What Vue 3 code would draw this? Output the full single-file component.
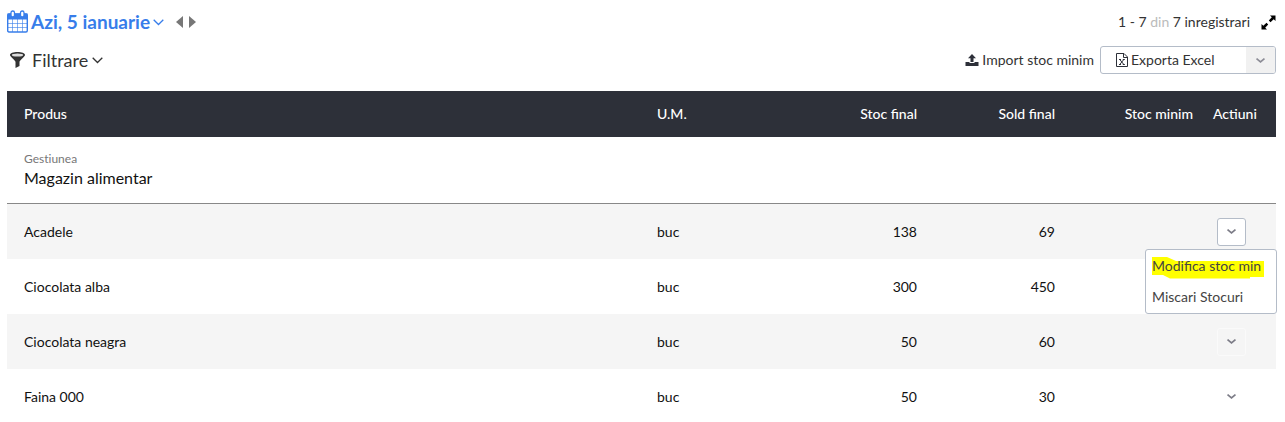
<script setup>
import { ref } from 'vue'

const rows = [
  { name: 'Acadele', unit: 'buc', stock: 138, balance: 69 },
  { name: 'Ciocolata alba', unit: 'buc', stock: 300, balance: 450 },
  { name: 'Ciocolata neagra', unit: 'buc', stock: 50, balance: 60 },
  { name: 'Faina 000', unit: 'buc', stock: 50, balance: 30 },
]
const open = ref(0)
const toggle = (i) => {
  open.value = open.value === i ? -1 : i
}
</script>

<template>
  <main class="page">
    <header class="bar top">
      <div class="group">
        <button class="date" type="button">
          <svg width="21" height="24" viewBox="0 0 21 24" fill="none" stroke="currentColor">
            <path d="M2 4H19Q20.300 4 20.300 5.500V20.500Q20.300 22 19 22H2Q.7 22 .7 20.500V5.500Q.7 4 2 4Z" stroke-width="1.400" />
            <path d="M.5 3.500H20.500V9.500H.5Z" fill="currentColor" stroke="none" />
            <path d="M5.500 9V22M10.500 9V22M15.500 9V22M1 13.500H20M1 17.500H20" stroke-opacity=".6" />
            <g fill="#fff" stroke-width="1.300"><rect x="4" y="1" width="3.500" height="6" rx="1.700" /><rect x="13.500" y="1" width="3.500" height="6" rx="1.700" /></g>
          </svg>
          <span>Azi, 5 ianuarie</span>
          <svg width="11" height="7" viewBox="0 0 11 7" fill="none" stroke="currentColor" stroke-width="1.300"><path d="M.7.8 5.500 5.500 10.300.8" /></svg>
        </button>
        <div class="steps">
          <button type="button" aria-label="Ziua anterioara"><svg width="7" height="12" viewBox="0 0 7 12"><path d="M7 0V12L0 6Z" fill="#777" /></svg></button>
          <button type="button" aria-label="Ziua urmatoare"><svg width="7" height="12" viewBox="0 0 7 12"><path d="M0 0V12L7 6Z" fill="#777" /></svg></button>
        </div>
      </div>
      <div class="group count">
        <span>1 - 7 <span class="muted">din</span> 7 inregistrari</span>
        <button type="button" aria-label="Ecran complet">
          <svg width="15" height="15" viewBox="0 0 15 15"><path d="M9 .5H14.500V6L12.700 4.200 9.500 7.200 7.800 5.500 10.800 2.300ZM6 14.500H.5V9L2.300 10.800 5.500 7.800 7.200 9.500 4.200 12.700Z" /></svg>
        </button>
      </div>
    </header>

    <div class="bar tools">
      <button class="filter" type="button">
        <svg width="15" height="16" viewBox="0 0 15 16">
          <path d="M0 3C0 1 3.400 0 7.500 0S15 1 15 3C15 4.500 9.500 8.500 9.500 10V14L5.500 16V10C5.500 8.500 0 4.500 0 3Z" fill="#333" />
          <ellipse cx="7.500" cy="3" rx="5.600" ry="1.500" fill="#ddd" />
        </svg>
        <span>Filtrare</span>
        <svg width="11" height="7" viewBox="0 0 11 7" fill="none" stroke="currentColor" stroke-width="1.300"><path d="M.7.8 5.500 5.500 10.300.8" /></svg>
      </button>
      <div class="group exports">
        <button class="import" type="button">
          <svg width="14" height="12" viewBox="0 0 14 12" fill="#2d3039"><path d="M7 0 11 4.200H8.500V8H5.500V4.200H3ZM.5 8H4.500V9H9.500V8H13.500V12H.5Z" /></svg>
          <span>Import stoc minim</span>
        </button>
        <div class="split">
          <button class="excel" type="button">
            <svg width="12" height="14" viewBox="0 0 12 14" fill="none" stroke="#2d3039"><path d="M.5.5H8L11.500 4V13.500H.5ZM7.500.5V4.500H11.500" /><path d="M3.800 6.500 7.800 11.500M7.800 6.500 3.800 11.500M3 6.500H5M6.800 6.500H8.800M3 11.500H5M6.800 11.500H8.800" /></svg>
            <span>Exporta Excel</span>
          </button>
          <button class="more" type="button" aria-label="Alte formate">
            <svg width="9" height="5" viewBox="0 0 9 5" fill="none" stroke="#8c8c96" stroke-width="1.700"><path d="M.5.6 4.500 3.900 8.500.6" /></svg>
          </button>
        </div>
      </div>
    </div>

    <table>
      <colgroup><col /><col class="c-unit" /><col class="c-stock" /><col class="c-num" /><col class="c-num" /><col class="c-act" /></colgroup>
      <thead>
        <tr><th>Produs</th><th>U.M.</th><th class="num">Stoc final</th><th class="num">Sold final</th><th class="num">Stoc minim</th><th>Actiuni</th></tr>
      </thead>
      <tbody>
        <tr class="store">
          <td colspan="6"><small>Gestiunea</small><div>Magazin alimentar</div></td>
        </tr>
        <tr v-for="(row, i) in rows" :key="row.name" class="item">
          <td>{{ row.name }}</td>
          <td>{{ row.unit }}</td>
          <td class="num">{{ row.stock }}</td>
          <td class="num">{{ row.balance }}</td>
          <td></td>
          <td>
            <div class="actions">
              <button class="toggle" :class="{ open: open === i }" type="button" :aria-label="'Actiuni ' + row.name" :aria-expanded="open === i" @click="toggle(i)">
                <svg width="9" height="5" viewBox="0 0 9 5" fill="none" stroke="#7c7c87" stroke-width="1.700"><path d="M.5.6 4.500 3.900 8.500.6" /></svg>
              </button>
              <div v-if="open === i" class="menu">
                <button type="button">
                  <svg class="marker" width="112" height="22" viewBox="0 0 112 22"><path d="M0 0H15L24 4H112V20H98V21.500H18L11 18H0Z" fill="#ff0" /></svg>
                  <span>Modifica stoc min</span>
                </button>
                <button type="button"><span>Miscari Stocuri</span></button>
              </div>
            </div>
          </td>
        </tr>
      </tbody>
    </table>
  </main>
</template>

<style>
html {
  scrollbar-width: none;
}
body {
  background: #fff;
}
</style>

<style scoped>
.page {
  padding: 6px 9px 0 7px;
  font-family: Lato, sans-serif;
  font-size: 14px;
  line-height: 20px;
  color: #333;
}
button {
  display: flex;
  align-items: center;
  padding: 0;
  border: 0;
  background: none;
  font: inherit;
  color: inherit;
  cursor: pointer;
}
svg {
  display: block;
  flex: none;
}
.bar,
.group {
  display: flex;
  align-items: center;
}
.bar {
  justify-content: space-between;
}
.top {
  height: 32px;
}
.date {
  gap: 3px;
  font-size: 19px;
  font-weight: 700;
  color: #377dea;
}
.top .group {
  gap: 12px;
}
.top .count {
  gap: 11px;
}
.steps {
  display: flex;
  gap: 6px;
}
.muted {
  color: #bbb;
}
.tools {
  height: 44px;
}
.filter {
  gap: 4px;
  padding-left: 3px;
  font-size: 18px;
}
.filter span {
  padding-left: 3px;
}
.exports {
  gap: 6px;
}
.import {
  gap: 3px;
}
.split {
  display: flex;
  box-sizing: border-box;
  width: 176px;
  height: 28px;
  border: 1px solid #b4bcc8;
  border-radius: 3px;
  overflow: hidden;
}
.excel {
  flex: 1;
  gap: 3px;
  padding-left: 15px;
}
.more {
  justify-content: center;
  width: 29px;
  background: #f1f1f1;
}
table {
  width: 100%;
  margin-top: 9px;
  border-collapse: collapse;
  table-layout: fixed;
  color: #111;
}
.c-unit,
.c-stock {
  width: 140px;
}
.c-num {
  width: 138px;
}
.c-act {
  width: 73px;
}
th,
td {
  padding: 0 10px;
  text-align: left;
}
th:first-child,
td:first-child {
  padding-left: 17px;
}
th {
  height: 46px;
  background: #2d3039;
  color: #fff;
  font-weight: 500;
}
.num {
  text-align: right;
}
th:last-child,
td:last-child {
  padding-right: 0;
}
.store td {
  height: 64px;
  padding-bottom: 2px;
  border-bottom: 1px solid #888;
  font-size: 16px;
}
small {
  display: block;
  font-size: 12px;
  line-height: 18px;
  font-variant-ligatures: none;
  color: #777;
}
.item td {
  height: 55px;
}
.item:nth-child(even) {
  background: #f5f5f5;
}
.actions {
  position: relative;
  padding-left: 4px;
}
.toggle {
  justify-content: center;
  box-sizing: border-box;
  width: 29px;
  height: 28px;
  border: 1px solid transparent;
  border-radius: 3px;
}
.item:nth-child(even) .toggle {
  border-color: #fafafa;
}
.item .toggle.open {
  border-color: #b4bcc8;
  background: #fff;
}
.menu {
  position: absolute;
  z-index: 1;
  top: 100%;
  right: -1px;
  box-sizing: border-box;
  width: 132px;
  margin-top: 3px;
  padding: 1px 0 0;
  border: 1px solid #b4bcc8;
  border-radius: 3px;
  background: #fff;
  color: #444;
}
.menu button {
  position: relative;
  width: 100%;
  height: 31px;
  padding-left: 6px;
}
.menu span {
  position: relative;
}
.marker {
  position: absolute;
  top: 6px;
  left: 6px;
}
</style>
